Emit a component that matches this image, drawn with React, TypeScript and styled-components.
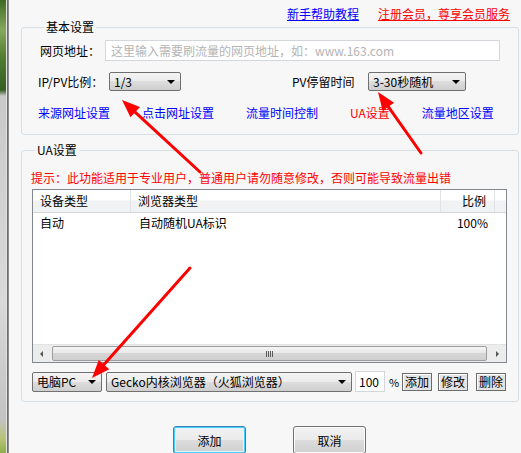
import React from "react";
import styled, { createGlobalStyle } from "styled-components";

const GlobalStyle = createGlobalStyle`
  html, body {
    margin: 0;
    padding: 0;
    background: #f7f7f7;
  }
  body {
    font-family: "Noto Sans CJK SC", "Liberation Sans", sans-serif;
    font-size: 12px;
    color: #000;
  }
`;

interface ArrowProps {
  x1: number;
  y1: number;
  x2: number;
  y2: number;
}

const Arrow: React.FC<ArrowProps> = ({ x1, y1, x2, y2 }) => {
  const dx = x2 - x1;
  const dy = y2 - y1;
  const len = Math.hypot(dx, dy);
  const ux = dx / len;
  const uy = dy / len;
  const headLen = 18;
  const headHalf = 7;
  const bx = x2 - ux * headLen;
  const by = y2 - uy * headLen;
  const points = `${x2},${y2} ${bx - uy * headHalf},${by + ux * headHalf} ${bx + uy * headHalf},${by - ux * headHalf}`;
  return (
    <g>
      <line x1={x1} y1={y1} x2={bx + ux * 2} y2={by + uy * 2} stroke="#f00" strokeWidth={3} strokeLinecap="round" />
      <polygon points={points} fill="#f00" />
    </g>
  );
};

const App: React.FC = () => {
  return (
    <Page>
      <GlobalStyle />
      <Strip />
      <Main>
        <TopBar>
          <TopLink href="#" color="#0000ff">新手帮助教程</TopLink>
          <TopLink href="#" color="#ff0000">注册会员，尊享会员服务</TopLink>
        </TopBar>

        <Group pad="7px 18px 14px 18px">
          <Legend>基本设置</Legend>
          <FormRow>
            <Label width={65}>网页地址：</Label>
            <UrlInput placeholder="这里输入需要刷流量的网页地址，如：www.163.com" />
          </FormRow>
          <FormRow top={11}>
            <Label width={71} offset={-2}>IP/PV比例：</Label>
            <Select width={72} height={19}>
              <span>1/3</span>
              <Caret />
            </Select>
            <Label width={76} offset={111}>PV停留时间</Label>
            <Select width={98} height={19}>
              <span>3-30秒随机</span>
              <Caret />
            </Select>
          </FormRow>
          <LinkRow>
            <NavLink href="#">来源网址设置</NavLink>
            <NavLink href="#">点击网址设置</NavLink>
            <NavLink href="#">流量时间控制</NavLink>
            <NavLink href="#" active>UA设置</NavLink>
            <NavLink href="#">流量地区设置</NavLink>
          </LinkRow>
        </Group>

        <Group pad="15px 10px 9px 9px" top={9}>
          <Legend>UA设置</Legend>
          <Tip>提示：此功能适用于专业用户，普通用户请勿随意修改，否则可能导致流量出错</Tip>
          <ListView>
            <ListHeader>
              <HeadCell width={98}>设备类型</HeadCell>
              <HeadCell width={310}>浏览器类型</HeadCell>
              <HeadCell width={54} right>比例</HeadCell>
            </ListHeader>
            <ListBody>
              <ListRow>
                <Cell width={99}>自动</Cell>
                <Cell width={311}>自动随机UA标识</Cell>
                <Cell width={54} right>100%</Cell>
              </ListRow>
            </ListBody>
            <ScrollBar>
              <ScrollButton>
                <ScrollTriangle dir="left" />
              </ScrollButton>
              <Thumb>
                <Grip />
              </Thumb>
              <ScrollButton>
                <ScrollTriangle dir="right" />
              </ScrollButton>
            </ScrollBar>
          </ListView>
          <Controls>
            <Select width={70} height={20}>
              <span>电脑PC</span>
              <Caret />
            </Select>
            <Select width={246} height={20}>
              <span>Gecko内核浏览器（火狐浏览器）</span>
              <Caret />
            </Select>
            <PercentInput defaultValue="100" />
            <Percent>%</Percent>
            <SmallButton>添加</SmallButton>
            <SmallButton gap={6}>修改</SmallButton>
            <SmallButton gap={8}>删除</SmallButton>
          </Controls>
        </Group>

        <Footer>
          <DialogButton focused>添加</DialogButton>
          <DialogButton>取消</DialogButton>
        </Footer>
      </Main>

      <Overlay width={521} height={453}>
        <Arrow x1={200} y1={172} x2={122} y2={100} />
        <Arrow x1={421} y1={153} x2={378} y2={92} />
        <Arrow x1={190} y1={268} x2={92} y2={378} />
      </Overlay>
    </Page>
  );
};

const Page = styled.div`
  position: relative;
  display: flex;
  width: 521px;
  height: 453px;
  overflow: hidden;
  background: #f7f7f7;
`;

const Strip = styled.div`
  width: 10px;
  flex-shrink: 0;
  background:
    linear-gradient(90deg, rgba(0, 0, 0, 0) 0, rgba(0, 0, 0, 0) 6px, #e2e2e2 6px, #e2e2e2 7px, #5e5e5e 7px, #9a9a9a 9px, #f7f7f7 9px),
    linear-gradient(180deg, #3e6a22 0, #86a85c 30px, #4d7a2e 60px, #355e22 90px, #c9c9c9 96px, #d9d9d9 300px, #c2c2c2 420px, #b8c478 438px, #8fae4a 453px);
`;

const Main = styled.div`
  flex: 1;
  display: flex;
  flex-direction: column;
  padding: 0 3px 0 11px;
`;

const TopBar = styled.div`
  height: 26px;
  box-sizing: border-box;
  display: flex;
  justify-content: flex-end;
  align-items: flex-start;
  gap: 19px;
  padding: 7px 9px 0 0;
`;

const TopLink = styled.a<{ color: string }>`
  color: ${p => p.color};
  text-decoration: underline;
  line-height: 14px;
  font-size: 12px;
`;

const Group = styled.fieldset<{ pad: string; top?: number }>`
  margin: ${p => p.top || 0}px 0 0 0;
  padding: ${p => p.pad};
  border: 1px solid #d5dfe5;
  border-radius: 3px;
  min-width: 0;
`;

const Legend = styled.legend`
  padding: 0 2px;
  margin-left: 4px;
  line-height: 12px;
  font-size: 12px;
  color: #000;
`;

const FormRow = styled.div<{ top?: number }>`
  display: flex;
  align-items: center;
  margin-top: ${p => p.top || 0}px;
`;

const Label = styled.span<{ width: number; offset?: number }>`
  width: ${p => p.width}px;
  margin-left: ${p => p.offset || 0}px;
  flex-shrink: 0;
  line-height: 14px;
  white-space: nowrap;
`;

const UrlInput = styled.input`
  width: 395px;
  height: 21px;
  box-sizing: border-box;
  border: 1px solid #d3d6da;
  background: #fff;
  padding: 0 5px;
  font-family: "Noto Sans CJK SC", "Liberation Sans", sans-serif;
  font-size: 12px;
  outline: none;
  &::placeholder {
    color: #b4b4b4;
  }
`;

const Select = styled.div<{ width: number; height: number }>`
  width: ${p => p.width}px;
  height: ${p => p.height}px;
  box-sizing: border-box;
  flex-shrink: 0;
  display: flex;
  align-items: center;
  justify-content: space-between;
  padding: 0 5px 0 4px;
  border: 1px solid #707070;
  border-radius: 2px;
  background: linear-gradient(180deg, #f4f4f4 0%, #ebebeb 50%, #dddddd 50%, #cfcfcf 100%);
  line-height: 14px;
  white-space: nowrap;
  overflow: hidden;
`;

const Caret = styled.i`
  width: 0;
  height: 0;
  flex-shrink: 0;
  border-left: 4px solid transparent;
  border-right: 4px solid transparent;
  border-top: 4px solid #000;
`;

const LinkRow = styled.div`
  display: flex;
  gap: 32px;
  margin: 15px 0 0 -2px;
`;

const NavLink = styled.a<{ active?: boolean }>`
  color: ${p => (p.active ? '#ff0000' : '#0000ff')};
  text-decoration: none;
  line-height: 14px;
  white-space: nowrap;
`;

const Tip = styled.div`
  color: #ff0000;
  line-height: 14px;
  white-space: nowrap;
`;

const ListView = styled.div`
  width: 475px;
  height: 174px;
  box-sizing: border-box;
  margin: 4px 0 0 1px;
  border: 1px solid #828790;
  background: #fff;
  display: flex;
  flex-direction: column;
`;

const ListHeader = styled.div`
  display: flex;
  height: 23px;
  box-sizing: border-box;
  border-bottom: 1px solid #d5d5d5;
  background: linear-gradient(180deg, #ffffff 0%, #ffffff 45%, #f1f2f4 50%, #f1f2f4 100%);
`;

const HeadCell = styled.div<{ width: number; right?: boolean }>`
  width: ${p => p.width}px;
  border-right: 1px solid #e2e3e5;
  padding: ${p => (p.right ? '0 8px 0 0' : '0 0 0 7px')};
  box-sizing: border-box;
  text-align: ${p => (p.right ? 'right' : 'left')};
  line-height: 22px;
  white-space: nowrap;
`;

const ListBody = styled.div`
  flex: 1;
  padding-top: 1px;
`;

const ListRow = styled.div`
  display: flex;
  height: 17px;
  line-height: 17px;
`;

const Cell = styled.div<{ width: number; right?: boolean }>`
  width: ${p => p.width}px;
  box-sizing: border-box;
  padding: ${p => (p.right ? '0 9px 0 0' : '0 0 0 7px')};
  text-align: ${p => (p.right ? 'right' : 'left')};
  white-space: nowrap;
`;

const ScrollBar = styled.div`
  height: 17px;
  display: flex;
  align-items: stretch;
  background: #ececec;
  border-top: 1px solid #e2e2e2;
`;

const ScrollButton = styled.div`
  width: 17px;
  display: flex;
  align-items: center;
  justify-content: center;
`;

const ScrollTriangle = styled.i<{ dir: 'left' | 'right' }>`
  width: 0;
  height: 0;
  border-top: 3px solid transparent;
  border-bottom: 3px solid transparent;
  ${p => (p.dir === 'left' ? 'border-right: 3px solid #555;' : 'border-left: 3px solid #555;')}
`;

const Thumb = styled.div`
  flex: 1;
  margin: 1px 2px;
  border: 1px solid #9d9d9d;
  border-radius: 2px;
  background: linear-gradient(180deg, #f5f5f5 0%, #e6e6e6 50%, #d6d6d6 50%, #cfcfcf 100%);
  display: flex;
  align-items: center;
  justify-content: center;
`;

const Grip = styled.i`
  width: 7px;
  height: 6px;
  background: repeating-linear-gradient(90deg, #5a5a5a 0, #5a5a5a 1px, transparent 1px, transparent 2px);
`;

const Controls = styled.div`
  display: flex;
  align-items: center;
  height: 21px;
  margin: 8px 0 0 1px;
  & > ${Select}:nth-child(2) {
    margin-left: 4px;
  }
`;

const PercentInput = styled.input`
  width: 30px;
  height: 21px;
  box-sizing: border-box;
  margin-left: 3px;
  border: 1px solid #d3d6da;
  background: #fff;
  padding: 0 3px;
  font-family: "Noto Sans CJK SC", "Liberation Sans", sans-serif;
  font-size: 12px;
  outline: none;
`;

const Percent = styled.span`
  margin-left: 4px;
  width: 13px;
  line-height: 14px;
  font-size: 11px;
`;

const SmallButton = styled.button<{ gap?: number }>`
  width: 30px;
  height: 18px;
  margin-left: ${p => p.gap || 0}px;
  padding: 0;
  border: 1px solid #6b6b6b;
  background: #e3e3e3;
  box-shadow: inset 1px 1px 0 #fff;
  font-family: "Noto Sans CJK SC", "Liberation Sans", sans-serif;
  font-size: 12px;
  line-height: 14px;
  color: #000;
  white-space: nowrap;
`;

const Footer = styled.div`
  display: flex;
  gap: 47px;
  margin-top: 24px;
  padding-left: 152px;
`;

const DialogButton = styled.button<{ focused?: boolean }>`
  width: 73px;
  height: 28px;
  padding: 0;
  border: 1px solid ${p => (p.focused ? '#3c7fb1' : '#707070')};
  border-radius: 3px;
  box-shadow: ${p => (p.focused ? 'inset 0 0 0 1px #48d0f8, inset 0 0 0 2px #dff4fd' : 'inset 0 0 0 1px #fcfcfc')};
  background: linear-gradient(180deg, #f2f2f2 0%, #ebebeb 50%, #dddddd 50%, #cfcfcf 100%);
  font-family: "Noto Sans CJK SC", "Liberation Sans", sans-serif;
  font-size: 12px;
  color: #000;
`;

const Overlay = styled.svg`
  position: absolute;
  left: 0;
  top: 0;
  pointer-events: none;
`;

export default App;
